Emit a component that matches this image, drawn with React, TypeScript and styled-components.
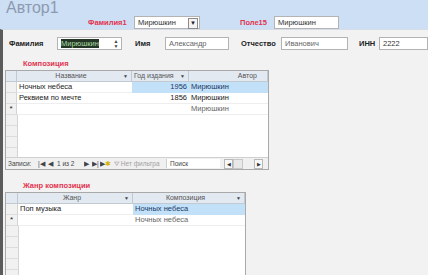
import * as React from "react";
import styled, { createGlobalStyle } from "styled-components";

const GlobalStyle = createGlobalStyle`
  html, body {
    margin: 0;
    padding: 0;
    background: #f2f2f2;
  }
  body {
    width: 428px;
    height: 275px;
    overflow: hidden;
    font-family: "Liberation Sans", Arial, sans-serif;
  }
`;

const Page = styled.div`
  width: 428px;
  height: 275px;
  display: flex;
  flex-direction: column;
  overflow: hidden;
`;

const Header = styled.div`
  height: 30px;
  background: #cddff4;
  display: flex;
  flex-direction: column;
  box-sizing: border-box;
`;

const Title = styled.div`
  height: 15px;
  line-height: 16px;
  padding-left: 6px;
  font-size: 16px;
  color: #8c9ab0;
`;

const HeaderRow = styled.div`
  display: flex;
  align-items: center;
  height: 14px;
  padding-left: 88px;
`;

const RedLabel = styled.span<{ $w?: number }>`
  font-size: 7.5px;
  font-weight: bold;
  color: #e2344f;
  width: ${(p) => (p.$w ? `${p.$w}px` : "auto")};
  flex: none;
`;

const Box = styled.div<{ $w: number; $gap?: number; $muted?: boolean }>`
  width: ${(p) => p.$w}px;
  height: 13px;
  margin-right: ${(p) => p.$gap ?? 0}px;
  box-sizing: border-box;
  background: #fff;
  border: 1px solid #b3b3b3;
  display: flex;
  align-items: center;
  padding-left: 3px;
  font-size: 7.5px;
  color: ${(p) => (p.$muted ? "#666" : "#333")};
  flex: none;
  position: relative;
`;

const DropBtn = styled.span`
  position: absolute;
  right: 1px;
  top: 1px;
  width: 8px;
  height: 9px;
  border: 1px solid #8a8a8a;
  background: #f4f4f4;
  font-size: 6px;
  line-height: 9px;
  text-align: center;
  color: #222;
`;

const Spinner = styled.span`
  position: absolute;
  right: 1px;
  top: 0;
  width: 8px;
  height: 12px;
  display: flex;
  flex-direction: column;
  align-items: center;
  justify-content: center;
  font-size: 5px;
  line-height: 5px;
  color: #444;
`;

const Selected = styled.span`
  background: #263626;
  color: #a9dca0;
`;

const Body = styled.div`
  flex: 1;
  border-left: 3px solid #5b5b5b;
  border-top: 1px solid #d6dde6;
  display: flex;
  flex-direction: column;
  padding-left: 2px;
`;

const FieldRow = styled.div`
  display: flex;
  align-items: center;
  height: 14px;
  margin-top: 6px;
  padding-left: 4px;
`;

const Label = styled.span<{ $w: number }>`
  width: ${(p) => p.$w}px;
  flex: none;
  font-size: 7.5px;
  font-weight: bold;
  color: #222;
`;

const Section = styled.div<{ $top: number }>`
  margin-top: ${(p) => p.$top}px;
  display: flex;
  flex-direction: column;
`;

const SectionTitle = styled.div`
  padding-left: 18px;
  height: 10px;
  line-height: 10px;
  font-size: 7.5px;
  font-weight: bold;
  color: #e2344f;
  margin-bottom: 1px;
`;

const Sheet = styled.div<{ $w: number; $h: number }>`
  width: ${(p) => p.$w}px;
  height: ${(p) => p.$h}px;
  box-sizing: border-box;
  background: #fff;
  border: 1px solid #a9a9a9;
  display: flex;
  flex-direction: column;
  overflow: hidden;
  flex: none;
`;

const Row = styled.div<{ $cols: string; $h?: number }>`
  display: grid;
  grid-template-columns: ${(p) => p.$cols};
  height: ${(p) => p.$h ?? 11}px;
  flex: none;
`;

const HeadCell = styled.div<{ $align?: string; $arrow?: boolean }>`
  background: #e3e9f1;
  border-right: 1px solid #c3c9d1;
  border-bottom: 1px solid #c3c9d1;
  font-size: 7px;
  line-height: 10px;
  color: #555;
  text-align: ${(p) => p.$align ?? "center"};
  padding: 0 ${(p) => (p.$arrow ? 8 : 10)}px 0 2px;
  position: relative;
  white-space: nowrap;
  overflow: hidden;
`;

const Arrow = styled.span`
  position: absolute;
  right: 3px;
  top: 0;
  font-size: 5px;
  color: #444;
`;

const Corner = styled.div`
  background: #e3e9f1;
  border-right: 1px solid #c3c9d1;
  border-bottom: 1px solid #c3c9d1;
`;

const Selector = styled.div<{ $w?: number }>`
  width: ${(p) => (p.$w ? `${p.$w}px` : "auto")};
  flex: none;
  background: #f1f1f1;
  border-right: 1px solid #d4d4d4;
  border-bottom: 1px solid #dcdcdc;
  font-size: 8px;
  line-height: 10px;
  text-align: center;
  color: #222;
`;

const Cell = styled.div<{ $sel?: boolean; $align?: string; $tone?: "data" | "link" | "muted" }>`
  background: ${(p) => (p.$sel ? "#c2e1f9" : "#fff")};
  border-bottom: 1px solid ${(p) => (p.$sel ? "#c2e1f9" : "#eeeeee")};
  font-size: 7.5px;
  line-height: 10px;
  padding: 0 2px;
  text-align: ${(p) => p.$align ?? "left"};
  white-space: nowrap;
  overflow: hidden;
  color: ${(p) => (p.$tone === "link" ? "#1c3865" : p.$tone === "muted" ? "#666" : "#222")};
`;

const Filler = styled.div`
  flex: 1;
  display: flex;
  flex-direction: column;
  overflow: hidden;
`;

const FillerRow = styled.div`
  height: 11px;
  flex: none;
  display: flex;
`;

const NavBar = styled.div`
  height: 11px;
  flex: none;
  background: #f0f0f0;
  border-top: 1px solid #d0d0d0;
  display: flex;
  align-items: center;
  font-size: 6.5px;
  color: #444;
  padding-left: 2px;
  white-space: nowrap;
`;

const NavText = styled.span<{ $w: number; $dim?: boolean }>`
  width: ${(p) => p.$w}px;
  flex: none;
  overflow: hidden;
  color: ${(p) => (p.$dim ? "#a0a0a0" : "#444")};
`;

const NavSearch = styled.span`
  width: 50px;
  height: 9px;
  flex: none;
  background: #fff;
  border-left: 1px solid #d0d0d0;
  line-height: 9px;
  padding-left: 3px;
  margin-right: 4px;
`;

const ScrollBtn = styled.span`
  width: 7px;
  height: 8px;
  flex: none;
  border: 1px solid #b8b8b8;
  background: #f7f7f7;
  font-size: 5px;
  line-height: 8px;
  text-align: center;
  color: #333;
`;

const Thumb = styled.span`
  width: 8px;
  height: 8px;
  flex: none;
  border: 1px solid #c8c8c8;
  background: #e8e8e8;
  margin-right: 11px;
`;

const Star = styled.span`
  color: #d9b300;
`;

const COLS1 = "11px 115px 57px 1fr";
const COLS2 = "12px 115px 1fr";

function EmptyRows({ sel, count }: { sel: number; count: number }) {
  return (
    <>
      {Array.from({ length: count }).map((_, i) => (
        <FillerRow key={i}>
          <Selector $w={sel} />
        </FillerRow>
      ))}
    </>
  );
}

export default function App() {
  return (
    <Page>
      <GlobalStyle />
      <Header>
        <Title>Автор1</Title>
        <HeaderRow>
          <RedLabel $w={46}>Фамилия1</RedLabel>
          <Box $w={66} $gap={40}>
            Мирюшкин
            <DropBtn>▼</DropBtn>
          </Box>
          <RedLabel $w={34}>Поле15</RedLabel>
          <Box $w={65}>Мирюшкин</Box>
        </HeaderRow>
      </Header>
      <Body>
        <FieldRow>
          <Label $w={48}>Фамилия</Label>
          <Box $w={65} $gap={13}>
            <Selected>Мирюшкин</Selected>
            <Spinner>
              <span>▲</span>
              <span>▼</span>
            </Spinner>
          </Box>
          <Label $w={30}>Имя</Label>
          <Box $w={64} $gap={12} $muted>
            Александр
          </Box>
          <Label $w={40}>Отчество</Label>
          <Box $w={67} $gap={11} $muted>
            Иванович
          </Box>
          <Label $w={20}>ИНН</Label>
          <Box $w={49}>2222</Box>
        </FieldRow>

        <Section $top={9}>
          <SectionTitle>Композиция</SectionTitle>
          <Sheet $w={264} $h={100}>
            <Row $cols={COLS1} $h={11}>
              <Corner />
              <HeadCell $arrow>
                Название<Arrow>▼</Arrow>
              </HeadCell>
              <HeadCell $align="left" $arrow>
                Год издания<Arrow>▼</Arrow>
              </HeadCell>
              <HeadCell $align="right">Автор</HeadCell>
            </Row>
            <Row $cols={COLS1}>
              <Selector />
              <Cell>Ночных небеса</Cell>
              <Cell $sel $align="right" $tone="link">
                1956
              </Cell>
              <Cell $sel $tone="link">
                Мирюшкин
              </Cell>
            </Row>
            <Row $cols={COLS1}>
              <Selector />
              <Cell>Реквием по мечте</Cell>
              <Cell $align="right">1856</Cell>
              <Cell>Мирюшкин</Cell>
            </Row>
            <Row $cols={COLS1}>
              <Selector>*</Selector>
              <Cell />
              <Cell />
              <Cell $tone="muted">Мирюшкин</Cell>
            </Row>
            <Filler>
              <EmptyRows sel={11} count={5} />
            </Filler>
            <NavBar>
              <NavText $w={30}>Записи:</NavText>
              <NavText $w={10}>|◀</NavText>
              <NavText $w={9}>◀</NavText>
              <NavText $w={27}>1 из 2</NavText>
              <NavText $w={8}>▶</NavText>
              <NavText $w={8}>▶|</NavText>
              <NavText $w={14}>
                ▶<Star>✱</Star>
              </NavText>
              <NavText $w={52} $dim>
                ⛛ Нет фильтра
              </NavText>
              <NavSearch>Поиск</NavSearch>
              <ScrollBtn>◀</ScrollBtn>
              <Thumb />
              <ScrollBtn>▶</ScrollBtn>
            </NavBar>
          </Sheet>
        </Section>

        <Section $top={11}>
          <SectionTitle>Жанр композиции</SectionTitle>
          <Sheet $w={241} $h={90}>
            <Row $cols={COLS2} $h={11}>
              <Corner />
              <HeadCell $arrow>
                Жанр<Arrow>▼</Arrow>
              </HeadCell>
              <HeadCell $arrow>
                Композиция<Arrow>▼</Arrow>
              </HeadCell>
            </Row>
            <Row $cols={COLS2}>
              <Selector />
              <Cell>Поп музыка</Cell>
              <Cell $sel $tone="link">
                Ночных небеса
              </Cell>
            </Row>
            <Row $cols={COLS2}>
              <Selector>*</Selector>
              <Cell />
              <Cell $tone="muted">Ночных небеса</Cell>
            </Row>
            <Filler>
              <EmptyRows sel={12} count={6} />
            </Filler>
          </Sheet>
        </Section>
      </Body>
    </Page>
  );
}
